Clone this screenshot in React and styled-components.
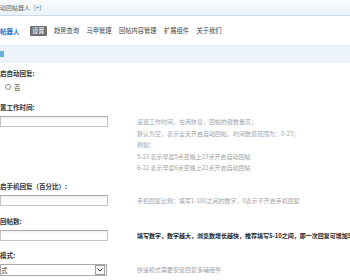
import React from 'react'
import styled, { createGlobalStyle } from 'styled-components'

const Global = createGlobalStyle`
  html, body { margin: 0; padding: 0; background: #fff; }
  body {
    width: 350px;
    height: 280px;
    overflow: hidden;
    font-family: "Noto Sans CJK SC", "Noto Sans", sans-serif;
    font-size: 6.5px;
    color: #333;
  }
`

const TopBar = styled.div`
  height: 15px;
  display: flex;
  align-items: center;
  gap: 4px;
  background: linear-gradient(#f8fbfe, #eaf2f9);
  border-bottom: 1px solid #c9dbea;
  font-size: 6px;
  color: #666;
`

const Plus = styled.span`
  color: #2a6cb0;
`

const Nav = styled.div`
  height: 29px;
  display: flex;
  align-items: center;
  gap: 7.5px;
  background: #fff;
`

const Brand = styled.div`
  color: #1f6fc0;
  font-weight: bold;
  font-size: 6.5px;
  margin-right: 3px;
`

const Tab = styled.div`
  height: 10px;
  line-height: 10px;
  padding: 0 ${p => (p.$active ? 2 : 0)}px;
  border-radius: 1px;
  font-size: 6.25px;
  color: ${p => (p.$active ? '#fff' : '#444')};
  background: ${p => (p.$active ? '#707070' : 'transparent')};
`

const SectionHead = styled.div`
  height: 18px;
  padding-top: 5px;
  box-sizing: border-box;
  background: #ecf3fb;
  border-top: 1px solid #e2ebf5;
`

const Marker = styled.div`
  width: 4px;
  height: 6px;
  background: #6aaee0;
`

const Form = styled.div`
  padding-top: 4px;
`

const Field = styled.div`
  margin-bottom: ${p => p.$gap || 0}px;
`

const Label = styled.div`
  height: 13px;
  line-height: 13px;
  margin-bottom: ${p => (p.$tight ? 1 : 2)}px;
  font-size: 6.5px;
  font-weight: bold;
  color: #333;
`

const Row = styled.div`
  display: grid;
  grid-template-columns: 137px 1fr;
  align-items: start;
`

const Input = styled.div`
  width: 106px;
  height: 9px;
  border: 1px solid #c4c4c4;
  border-top-color: #a8a8a8;
  background: linear-gradient(#f1f1f1, #fff 45%);
`

const Select = styled.div`
  width: 105px;
  height: 10px;
  border: 1px solid #a9a9a9;
  display: flex;
  align-items: center;
  justify-content: space-between;
  font-size: 6.5px;
  color: #333;
  background: #fff;
`

const Arrow = styled.div`
  width: 8px;
  height: 8px;
  margin-right: 1px;
  border: 1px solid #a0a0a0;
  display: flex;
  align-items: center;
  justify-content: center;
  background: #f4f4f4;
`

const Help = styled.div`
  font-size: 6px;
  line-height: 11.5px;
  color: ${p => (p.$dark ? '#222' : '#a3a3a3')};
  font-weight: ${p => (p.$dark ? 'bold' : 'normal')};
  white-space: nowrap;
`

const Radio = styled.label`
  display: flex;
  align-items: center;
  gap: 3px;
  padding-left: 5px;
  height: 12px;
  font-size: 6.5px;
  color: #444;
`

const Circle = styled.span`
  width: 4px;
  height: 4px;
  border: 1px solid #8a8a8a;
  border-radius: 50%;
`

const App = () => {
  return (
    <>
      <Global />
      <TopBar>
        <span>动回帖器人</span>
        <Plus>[+]</Plus>
      </TopBar>
      <Nav>
        <Brand>帖器人</Brand>
        <Tab $active>设置</Tab>
        <Tab>趋势查询</Tab>
        <Tab>马甲管理</Tab>
        <Tab>回帖内容管理</Tab>
        <Tab>扩展组件</Tab>
        <Tab>关于我们</Tab>
      </Nav>
      <SectionHead>
        <Marker />
      </SectionHead>
      <Form>
        <Field $gap={8}>
          <Label $tight>启自动回复:</Label>
          <Radio>
            <Circle />否
          </Radio>
        </Field>
        <Field $gap={6}>
          <Label>置工作时间:</Label>
          <Row>
            <Input />
            <div>
              <Help>设置工作时间，在闲休息，回帖的键数量高；</Help>
              <Help>默认为空，表示全天开启自动回帖，时间数值范围为：0-23；</Help>
              <Help>例如：</Help>
              <Help>5-23 表示早晨5点至晚上23点开启自动回帖</Help>
              <Help>6-22 表示早晨6点至晚上22点开启自动回帖</Help>
            </div>
          </Row>
        </Field>
        <Field $gap={9}>
          <Label>启手机回复（百分比）:</Label>
          <Row>
            <Input />
            <Help>手机回复比例：填写1-100之间的数字，0表示不开启手机回复</Help>
          </Row>
        </Field>
        <Field $gap={7}>
          <Label>回帖数:</Label>
          <Row>
            <Input />
            <Help $dark>填写数字，数字越大，浏览数增长越快，推荐填写5-10之间，即一次回复可增加5</Help>
          </Row>
        </Field>
        <Field>
          <Label>模式:</Label>
          <Row>
            <Select>
              <span>式</span>
              <Arrow>
                <svg width="6" height="4" viewBox="0 0 6 4">
                  <path d="M0.5 0.5 L3 3 L5.5 0.5" fill="none" stroke="#333" strokeWidth="1" />
                </svg>
              </Arrow>
            </Select>
            <Help>快速模式需要安装回复多辅组件</Help>
          </Row>
        </Field>
      </Form>
    </>
  )
}

export default App
